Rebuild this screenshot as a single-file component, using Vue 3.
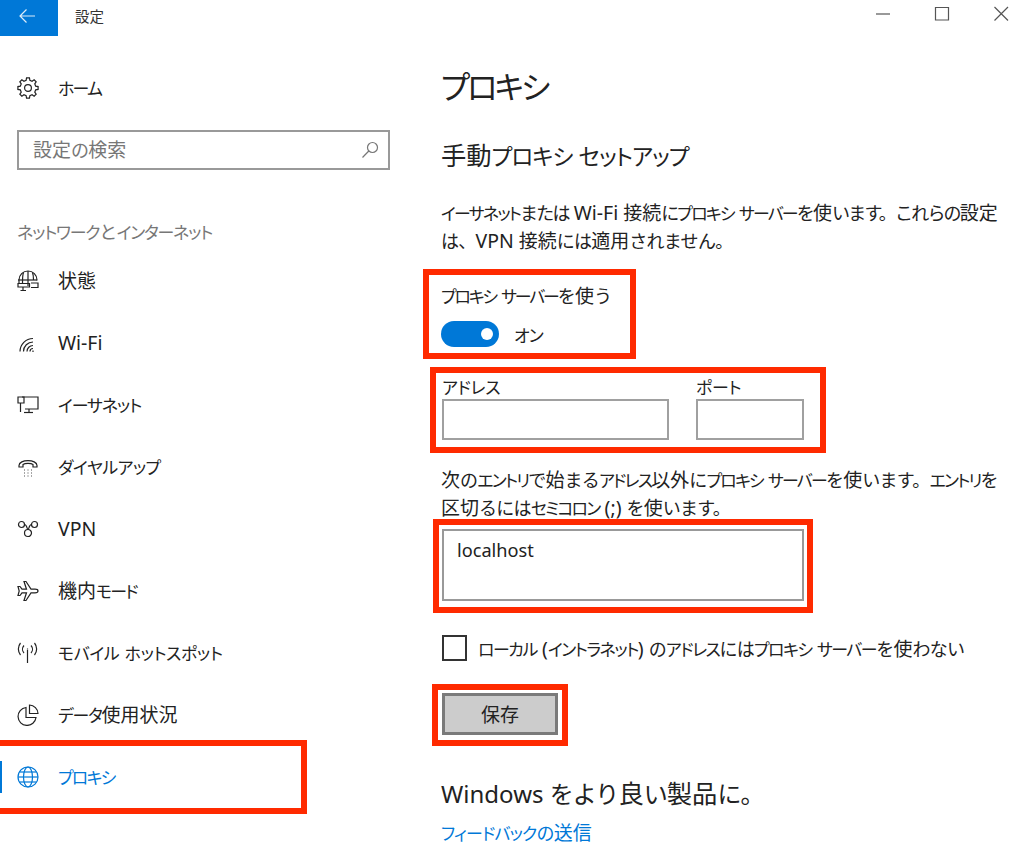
<script setup>
import { h } from 'vue'

const runPattern = /[\u30A0-\u30FF]+|[\u3040-\u309F\u3001\u3002]+|[\u4E00-\u9FFF]+|[^\u30A0-\u30FF\u3040-\u309F\u3001\u3002\u4E00-\u9FFF]+/g
const runClass = (s) => {
  const c = s.charCodeAt(0)
  if (c >= 0x30a0 && c <= 0x30ff) return 'run-kata'
  if ((c >= 0x3040 && c <= 0x309f) || c === 0x3001 || c === 0x3002) return 'run-hira'
  if (c >= 0x4e00 && c <= 0x9fff) return 'run-han'
  return 'run-latin'
}
const T = (props) => (props.t.match(runPattern) || []).map((s) => h('span', { class: runClass(s) }, s))
T.props = ['t']

const gear = (() => {
  const cx = 11, cy = 11, teeth = 8
  let d = ''
  for (let i = 0; i < teeth; i++) {
    const a = (i / teeth) * Math.PI * 2 - Math.PI / 2
    const w = Math.PI / teeth
    const pts = [
      [7.9, a - w * 0.62],
      [10.2, a - w * 0.36],
      [10.2, a + w * 0.36],
      [7.9, a + w * 0.62]
    ]
    pts.forEach(([r, t], j) => {
      const x = (cx + r * Math.cos(t)).toFixed(2)
      const y = (cy + r * Math.sin(t)).toFixed(2)
      d += (i === 0 && j === 0 ? 'M' : 'L') + x + ' ' + y
    })
  }
  return d + 'Z M14.4 11a3.4 3.4 0 1 1-6.8 0a3.4 3.4 0 1 1 6.8 0Z'
})()

const items = [
  { label: '状態', d: ['M2 13V10a9 9 0 0 1 18 0v.5', 'M1 10h19', 'M11 1v15', 'M6.5 2.5C5.5 5 5.5 8 5.5 13', 'M15.500 2.500C16.500 5 16.500 7 16.500 10', 'M1 13.500h11.500v3.500H1Z', 'M14 13h7v4.500h-7', 'M6 17v3.500M3.500 20.500h5.500'] },
  { label: 'Wi-Fi', d: ['M3 19.500A13 13 0 0 1 16 6.500', 'M6.500 19.500A9.500 9.500 0 0 1 16 10', 'M10 19.500A6 6 0 0 1 16 13.500', 'M13 19.500A3 3 0 0 1 16 16.500', 'M16 18.500v1.500'] },
  { label: 'イーサネット', k: '-0.065em', d: ['M5 3H21V15H8', 'M1 3H7V9H1Z', 'M3.500 9V18', 'M12 15V18.500', 'M7 18.500H16'] },
  { label: 'ダイヤルアップ', k: '-0.03em', d: ['M2 9.500C2 3 20 3 20 9.500V11H16V8.500C14 7 8 7 6 8.500V11H2Z', 'M7 14h.8M10.600 14h.8M14.200 14h.8M7 17h.8M10.600 17h.8M14.200 17h.8M7 20h.8M10.600 20h.8M14.200 20h.8'] },
  { label: 'VPN', d: ['M7.500 6.500a3 3 0 1 1-6 0a3 3 0 1 1 6 0', 'M20.500 6.500a3 3 0 1 1-6 0a3 3 0 1 1 6 0', 'M14.500 15a3.500 3.500 0 1 1-7 0a3.500 3.500 0 1 1 7 0', 'M7.500 6.500C10 6.500 10 11.500 11 11.500C12 11.500 12 6.500 14.500 6.500'] },
  { label: '機内モード', k: '-0.1em', d: ['M21 11c0-1.200-1.500-1.800-3-1.800H14L9 1.500H7L9.500 9.200H5L3 6.500H1L2.200 11L1 15.500H3L5 12.800H9.500L7 20.500H9L14 12.800H18C19.500 12.800 21 12.200 21 11Z'] },
  { label: 'モバイル ホットスポット', k: '-0.02em', d: ['M10.500 8V21', 'M7 3.500A5.500 5.500 0 0 0 7 11', 'M14 3.500A5.500 5.500 0 0 1 14 11', 'M3.500 1A9.500 9.500 0 0 0 3.500 13', 'M17.500 1A9.500 9.500 0 0 1 17.500 13', 'M10.500 6.500v1'] },
  { label: 'データ使用状況', k: '-0.075em', d: ['M9 3.500A9 9 0 1 0 19 13.500H9Z', 'M12.500 1A8.800 8.800 0 0 1 21 9.500H12.500Z'] },
  { label: 'プロキシ', k: '-0.1em', active: true, d: ['M1 11a10 10 0 1 0 20 0a10 10 0 1 0-20 0', 'M6.500 11a4.500 10 0 1 0 9 0a4.500 10 0 1 0-9 0', 'M1 11H21', 'M2.500 6H19.500', 'M2.500 16H19.500'] }
]
</script>

<template>
  <div class="window">
    <header class="titlebar">
      <button class="back" aria-label="戻る">
        <svg width="18" height="16" viewBox="0 0 18 16"><path d="M17 8H2M8.500 1.500L2 8l6.500 6.500" /></svg>
      </button>
      <span class="app-title">設定</span>
      <div class="controls">
        <svg width="16" height="16" viewBox="0 0 16 16"><path d="M1 9H15" /></svg>
        <svg width="16" height="16" viewBox="0 0 16 16"><path d="M1.500 2.500H14.500V15H1.500Z" /></svg>
        <svg width="16" height="16" viewBox="0 0 16 16"><path d="M1.500 2L15 15.500M15 2L1.500 15.500" /></svg>
      </div>
    </header>

    <div class="content">
      <aside class="sidebar">
        <div class="nav-row home">
          <svg class="icon" width="22" height="22" viewBox="0 0 22 22"><path :d="gear" /></svg>
          <span class="nav-label"><T t="ホーム" /></span>
        </div>
        <div class="search">
          <span class="nav-label"><T t="設定の検索" /></span>
          <svg width="18" height="18" viewBox="0 0 18 18"><path d="M16.500 6.500a5 5 0 1 1-10 0a5 5 0 1 1 10 0M7.800 10L1.500 16.500" /></svg>
        </div>
        <div class="section"><T t="ネットワークとインターネット" /></div>
        <nav>
          <div v-for="item in items" :key="item.label" class="nav-row" :class="{ active: item.active }" :style="item.k ? { '--k': item.k } : null">
            <svg class="icon" width="22" height="22" viewBox="0 0 22 22"><path v-for="p in item.d" :key="p" :d="p" /></svg>
            <span class="nav-label"><T :t="item.label" /></span>
          </div>
        </nav>
      </aside>

      <main class="main">
        <h1><T t="プロキシ" /></h1>
        <h2><T t="手動プロキシ セットアップ" /></h2>
        <p class="desc first"><span class="tight"><T t="イーサネットまたは Wi-Fi 接続にプロキシ サーバーを使います。これらの設定" /></span><br /><T t="は、VPN 接続には適用されません。" /></p>
        <div class="use-label"><T t="プロキシ サーバーを使う" /></div>
        <div class="toggle-row">
          <span class="toggle"><span class="thumb"></span></span>
          <span><T t="オン" /></span>
        </div>
        <div class="fields">
          <label class="field addr"><span><T t="アドレス" /></span><span class="input"></span></label>
          <label class="field port"><span><T t="ポート" /></span><span class="input"></span></label>
        </div>
        <p class="desc second"><T t="次のエントリで始まるアドレス以外にプロキシ サーバーを使います。エントリを" /><br /><T t="区切るにはセミコロン (;) を使います。" /></p>
        <div class="textarea"><T t="localhost" /></div>
        <div class="check-row">
          <span class="checkbox"></span>
          <span><T t="ローカル (イントラネット) のアドレスにはプロキシ サーバーを使わない" /></span>
        </div>
        <button class="save"><T t="保存" /></button>
        <h2 class="improve"><T t="Windows をより良い製品に。" /></h2>
        <a class="feedback"><T t="フィードバックの送信" /></a>
      </main>
    </div>

    <div class="mark m-nav"></div>
    <div class="mark m-toggle"></div>
    <div class="mark m-fields"></div>
    <div class="mark m-text"></div>
    <div class="mark m-save"></div>
  </div>
</template>

<style scoped>
.window {
  position: relative;
  width: 1024px;
  height: 866px;
  overflow: hidden;
  background: #fff;
  color: #222;
  font-family: "Noto Sans", "Noto Sans CJK JP", sans-serif;
  font-size: 18px;
}
svg path { fill: none; stroke: currentColor; stroke-width: 1.2; }
.titlebar { display: flex; align-items: center; height: 36px; }
.back {
  display: flex; align-items: center; justify-content: center;
  width: 58px; height: 36px; border: 0; padding: 0 4px 4px 0;
  background: #0078d7; color: #dcecf9;
}
.app-title { margin-left: 17px; font-size: 14.5px; line-height: 36px; margin-top: -5px; color: #333; }
.controls { display: flex; gap: 43px; margin-left: auto; margin-right: 15px; margin-top: -10px; color: #555; }
.content { display: flex; }
.sidebar { width: 441px; flex: none; }
.nav-row { display: flex; align-items: center; height: 62px; padding-left: 17px; gap: 19px; white-space: nowrap; }
.nav-label { margin-top: -2px; }
.home { margin-top: 21px; --k: -0.105em; }
.icon { flex: none; }
.search {
  display: flex; align-items: center; justify-content: space-between;
  box-sizing: border-box; width: 373px; height: 40px; margin: 11px 0 0 17px;
  padding: 0 9px 0 14px; border: 2.5px solid #999; color: #777;
}
.section { margin: 50px 0 6px 17px; height: 24px; line-height: 24px; color: #777; --k: -0.07em; }
.active { color: #0078d7; position: relative; }
.active::before {
  content: ""; position: absolute; left: 0; top: 15px; width: 2px; height: 32px; background: #0078d7;
}
.main { flex: 1; min-width: 0; white-space: nowrap; }
h1 { margin: 26px 0 0; font-size: 33.5px; font-weight: 400; line-height: 48px; height: 48px; color: #222; --k: -0.095em; }
h2 { margin: 28px 0 0; font-size: 24px; font-weight: 400; line-height: 34px; height: 34px; color: #222; --l: 1em; }
.desc { margin: 0; line-height: 27px; --k: -0.105em; }
.desc.first { margin-top: 27px; }
.tight { --h: -0.1em; }
.use-label { margin-top: 28px; height: 26px; line-height: 26px; --k: -0.125em; }
.toggle-row { display: flex; align-items: center; gap: 15px; margin-top: 12px; height: 26px; }
.toggle { display: block; position: relative; width: 58px; height: 26px; border-radius: 13px; background: #0078d7; }
.thumb { position: absolute; right: 6px; top: 7px; width: 12px; height: 12px; border-radius: 50%; background: #fff; }
.fields { display: flex; gap: 27px; margin: 27px 0 0 1px; --k: -0.015em; }
.field { display: flex; flex-direction: column; }
.field > span:first-child { height: 25px; line-height: 26px; }
.addr { width: 227px; }
.port { width: 108px; }
.input { display: block; box-sizing: border-box; height: 41px; border: 2.5px solid #a0a0a0; }
.desc.second { margin-top: 26px; }
.textarea {
  box-sizing: border-box; width: 362px; height: 72px; margin: 7px 0 0 1px;
  padding: 6px 13px; border: 2.5px solid #999; line-height: 26px; --l: 1.01em;
}
.check-row { display: flex; align-items: center; gap: 11px; margin: 34px 0 0 1px; height: 26px; --k: -0.085em; }
.checkbox { box-sizing: border-box; width: 25px; height: 26px; border: 2.5px solid #333; flex: none; }
.save {
  display: block; box-sizing: border-box; width: 116px; height: 42px; margin: 32px 0 0 1px;
  background: #ccc; border: 3px solid #7a7a7a; color: #222;
  font: inherit;
}
.improve { margin-top: 41px; }
.feedback { display: block; margin-top: 10px; height: 26px; line-height: 26px; color: #0078d7; --k: -0.05em; }
.mark { position: absolute; box-sizing: border-box; border: 6px solid #ff2a00; pointer-events: none; }
.m-nav { left: -6px; top: 740px; width: 313px; height: 74px; }
.m-toggle { left: 423px; top: 269px; width: 213px; height: 90px; }
.m-fields { left: 430px; top: 367px; width: 396px; height: 86px; }
.m-text { left: 433px; top: 519px; width: 380px; height: 94px; }
.m-save { left: 432px; top: 684px; width: 136px; height: 62px; }
</style>

<style>
.run-kata { font-size: 0.94em; font-feature-settings: "palt"; letter-spacing: var(--k, -0.045em); }
.run-hira { letter-spacing: var(--h, -0.04em); }
.run-han { font-size: 1.055em; }
.run-latin { font-size: var(--l, 1.08em); }
</style>
